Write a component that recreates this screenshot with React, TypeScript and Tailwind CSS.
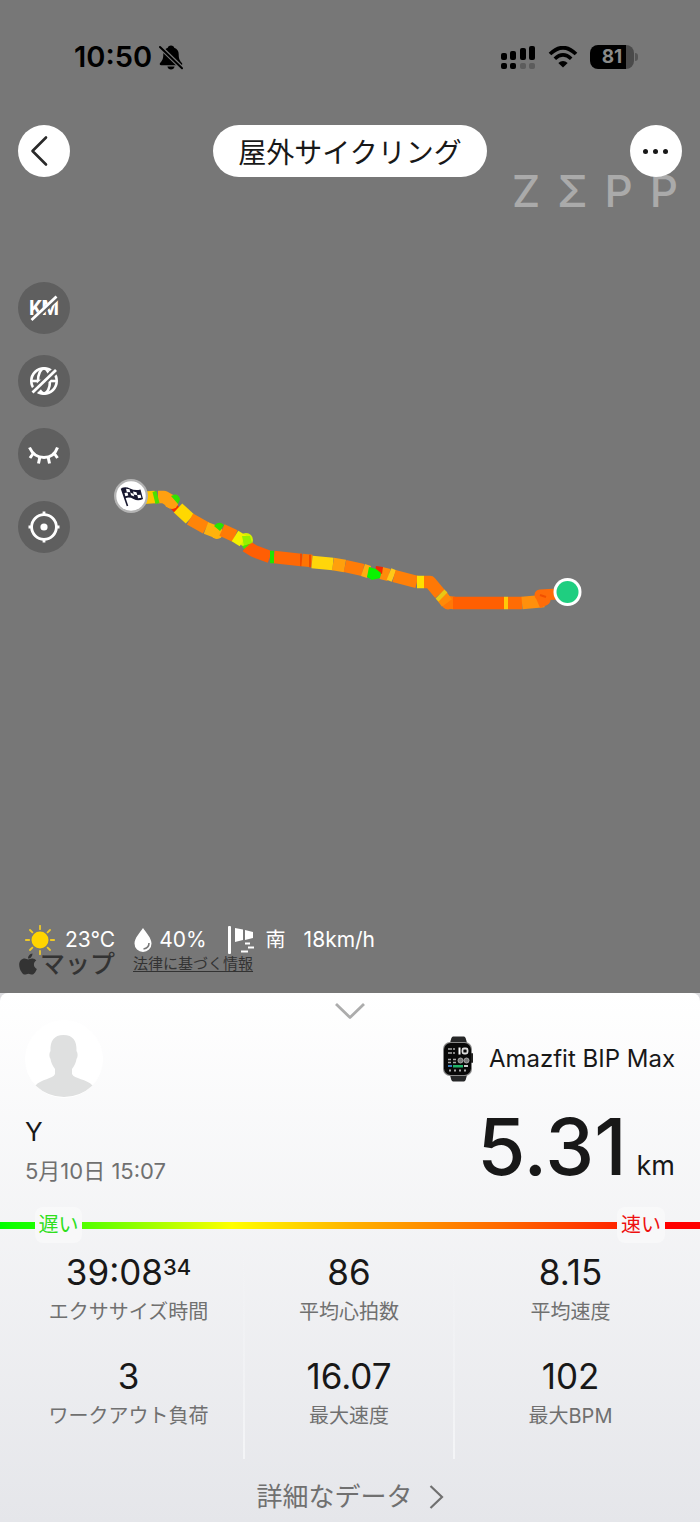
import { FaApple } from "react-icons/fa";

type Segment = { d: string; color: string };

const segments: Segment[] = [
  { d: "M140 498 L155 497", color: "#ffc400" },
  { d: "M158 497 L164 497 L171 501 L174 504", color: "#ffa010" },
  { d: "M154 498 L158 497", color: "#4be000" },
  { d: "M173 511 L178 506", color: "#f52a00" },
  { d: "M178 508 L190 519", color: "#ffd800" },
  { d: "M190 519 L206 528", color: "#ff8408" },
  { d: "M206 528 L219 533", color: "#ffb20c" },
  { d: "M222 530 L235 536", color: "#ff7a06" },
  { d: "M235 536 L243 541", color: "#f4f000" },
  { d: "M246 546 L254 551 L270 557", color: "#ff5e04" },
  { d: "M274 557 L301 560", color: "#ff6804" },
  { d: "M270 557 L274 557", color: "#1fe400" },
  { d: "M300 560 L302 560", color: "#f04a00" },
  { d: "M302 560 L312 561", color: "#ff7404" },
  { d: "M309 561 L311 561", color: "#ee4c00" },
  { d: "M312 562 L333 564", color: "#ffd60a" },
  { d: "M333 564 L345 566", color: "#ffa00c" },
  { d: "M345 566 L363 570", color: "#ff7c08" },
  { d: "M363 570 L369 572", color: "#ffae10" },
  { d: "M381 573 L389 575", color: "#ff8c0a" },
  { d: "M389 574 L394 576", color: "#ffc818" },
  { d: "M394 576 L417 582", color: "#ff8008" },
  { d: "M417 582 L424 582", color: "#ffe000" },
  { d: "M424 582 L430 582 L440 594", color: "#ff7806" },
  { d: "M447 602 L454 603", color: "#ff7806" },
  { d: "M441 595 L447 603", color: "#ff8a08" },
  { d: "M440 594 L443 597", color: "#e8c814" },
  { d: "M453 603 L504 603", color: "#ff5f02" },
  { d: "M508 603 L522 603", color: "#ff6c04" },
  { d: "M504 603 L508 603", color: "#ffc808" },
  { d: "M522 603 L544 601", color: "#ff900c" },
];

function Route() {
  return (
    <svg
      className="pointer-events-none absolute left-0 top-0 h-[700px] w-[700px]"
      viewBox="0 0 700 700"
      fill="none"
      aria-hidden="true"
    >
      <circle cx="175" cy="499" r="4.5" fill="#38e000" />
      <circle cx="170" cy="502" r="6" fill="#ffa010" />
      <circle cx="173" cy="504" r="5" fill="#ffa010" />
      <circle cx="217" cy="533" r="6" fill="#ffb20c" />
      <circle cx="246" cy="540" r="7" fill="#d4f000" />
      <circle cx="448" cy="603" r="6.5" fill="#ff7806" />
      <g strokeWidth="12.5" strokeLinejoin="round">
        {segments.map((s) => (
          <path key={s.d} d={s.d} stroke={s.color} />
        ))}
      </g>
      <circle cx="172" cy="503" r="6" fill="#ffa010" />
      <path d="M171 496 Q177 493 180 499 L178 504 Z" fill="#30e400" />
      <path d="M214 526 Q219 520 224 525 L220 531 Z" fill="#28e400" />
      <path d="M242 536 L250 536 L252 543 L244 546 Z" fill="#96f000" />
      <path d="M242 546 L250 544 L244 549 Z" fill="#40e800" />
      <path d="M376 566 L383 567 L382 574 L375 572 Z" fill="#f02800" />
      <path d="M369 567 L376 569 L381 573 L380 578 L372 580 L367 577 Z" fill="#08f400" />
      <path d="M538 603 L545 600 L540 595 L558 594" stroke="#ff6c08" strokeWidth="11" strokeLinejoin="round" />
      <path d="M540 595 L546 597" stroke="#f25000" strokeWidth="2" />
      <circle cx="131" cy="496" r="17" fill="#b4b4b4" />
      <circle cx="131" cy="496" r="14.700" fill="#fff" />
      <path d="M121.5 488.500 L127.500 506" stroke="#17172e" strokeWidth="1.600" />
      <path d="M121.500 488 Q126 486.500 130 488.500 Q135 491 140.500 489.500 L143 499 Q138 501.500 133.500 499 Q129 496.500 125 498.500 Z" fill="#17172e" />
      <path d="M126 488.800 l3.500 .5 .8 3 -3.500 -.4z M133 491.500 l3.500 .7 .8 3 -3.500 -.7z M130.300 492.500 l3.200 1.500 .8 2.500 -3.200 -1.200z M124.500 493 l3 -.5 .8 3 -3 .8z M137.300 495 l3.300 -.2 .8 3 -3.300 .5z" fill="#fff" />
      <circle cx="567.500" cy="592" r="14" fill="#fff" />
      <circle cx="567.500" cy="592" r="11" fill="#1fce80" />
    </svg>
  );
}

function StatusBar() {
  return (
    <div className="flex h-[34px] items-center justify-between pl-[74px] pr-[62px] text-black">
      <div className="flex items-center gap-[7px]">
        <time className="text-[29px] font-semibold leading-[34px]">10:50</time>
        <svg className="h-[25px] w-6" viewBox="0 0 24 25" aria-label="消音">
          <path d="M12 0.500c1.900 0 2.900 1 3.200 2.200 3 1 4.500 3.400 4.500 6.600 0 5.200 1.300 6.500 3.200 8.700.8 1 .3 2.200-1 2.200H2.100c-1.300 0-1.800-1.200-1-2.200 1.900-2.200 3.200-3.500 3.200-8.700 0-3.200 1.500-5.600 4.500-6.600C9.100 1.500 10.100.5 12 .5zM8.400 21.600h7.200c-.4 1.800-1.700 2.900-3.600 2.900s-3.200-1.100-3.600-2.900z" />
          <path d="M0 1 L24 24" stroke="#777" strokeWidth="4.500" />
          <path d="M1 2 L23 23.200" stroke="#000" strokeWidth="2" strokeLinecap="round" />
        </svg>
      </div>
      <div className="flex items-center gap-3">
        <svg className="h-[25px] w-9" viewBox="0 0 36 25" aria-label="電波">
          <rect x="1" y="8" width="6" height="7" rx="2" />
          <rect x="10" y="6" width="6" height="9" rx="2" />
          <rect x="20" y="3" width="6" height="12" rx="2" />
          <rect x="29" y="1" width="6" height="14" rx="2" />
          <rect x="1" y="18" width="6" height="6" rx="2" />
          <rect x="10" y="18" width="6" height="6" rx="2" />
          <rect x="20" y="18" width="6" height="6" rx="2" fill="#5c5c5c" />
          <rect x="29" y="18" width="6" height="6" rx="2" fill="#5c5c5c" />
        </svg>
        <svg className="h-[22px] w-[30px]" viewBox="0 0 30 22" fill="none" aria-label="Wi-Fi">
          <path d="M2 8 Q15 -4.500 28 8" stroke="#000" strokeWidth="3.800" />
          <path d="M6.800 12.800 Q15 5 23.200 12.800" stroke="#000" strokeWidth="3.600" />
          <path d="M10.300 17 Q15 13 19.700 17 L15 21.500 Z" fill="#000" />
        </svg>
        <div className="flex items-center gap-px">
          <div className="flex h-6 w-11 items-center justify-center rounded-lg bg-[linear-gradient(90deg,#000_81%,#4a4a4a_81%)] text-[19px] font-bold leading-6 text-[#8a8a8a]">
            81
          </div>
          <span className="h-2 w-[3px] rounded-r-full bg-[#555]" />
        </div>
      </div>
    </div>
  );
}

function KmOff() {
  return (
    <svg className="size-8" viewBox="0 0 32 32" aria-hidden="true">
      <text
        x="16"
        y="23"
        textAnchor="middle"
        className="fill-white font-['Roboto',sans-serif] text-[20px] font-bold leading-5"
      >
        KM
      </text>
      <path d="M4 29 L29 6" stroke="#5f5f5f" strokeWidth="5" />
      <path d="M3.500 28 L28.500 4.500" stroke="#fff" strokeWidth="2.800" />
    </svg>
  );
}

function GlobeOff() {
  return (
    <svg className="size-8" viewBox="0 0 32 32" fill="none" stroke="#fff" strokeWidth="2.600" aria-hidden="true">
      <circle cx="16" cy="16" r="12.700" />
      <ellipse cx="16" cy="16" rx="6" ry="12.500" />
      <path d="M4 16 H28" />
      <path d="M4 28 L28 5" stroke="#5f5f5f" strokeWidth="7" />
      <path d="M4.500 27.500 L28 5" strokeWidth="2.800" />
    </svg>
  );
}

function EyeClosed() {
  return (
    <svg className="size-8" viewBox="0 0 32 32" fill="none" stroke="#fff" strokeWidth="3" aria-hidden="true">
      <path d="M1.500 9.500 Q6 19.500 16 19.500 Q26 19.500 29.500 9.500" />
      <path d="M5.500 15 L2 20 M12 18.500 L10.500 25.500 M20 18.500 L21.500 25.500 M26 15 L29.500 20" />
    </svg>
  );
}

function Target() {
  return (
    <svg className="size-8" viewBox="0 0 32 32" fill="none" stroke="#fff" strokeWidth="2.800" aria-hidden="true">
      <circle cx="16" cy="16" r="12.400" />
      <path d="M16 .5 V4 M16 28 V31.500 M.5 16 H4 M28 16 H31.500" />
      <circle cx="16" cy="16" r="3.600" fill="#fff" stroke="none" />
    </svg>
  );
}

const tools = [
  { label: "距離表示", icon: <KmOff /> },
  { label: "地図表示", icon: <GlobeOff /> },
  { label: "軌跡を隠す", icon: <EyeClosed /> },
  { label: "現在位置", icon: <Target /> },
];

function Weather() {
  return (
    <div className="flex h-7 items-center pl-[25px] text-[21px] leading-7 text-white">
      <svg className="size-[30px]" viewBox="0 0 30 30" aria-hidden="true">
        <circle cx="15" cy="15" r="8.500" fill="#ffd400" />
        <path
          d="M15 .8v3.400M15 25.800v3.400M.8 15h3.400M25.800 15h3.400M5 5l2.400 2.400M22.600 22.600L25 25M5 25l2.400-2.400M22.600 7.400L25 5"
          stroke="#efc928"
          strokeWidth="1.800"
          strokeLinecap="round"
        />
      </svg>
      <span className="ml-[10px]">23°C</span>
      <svg className="ml-[19px] h-[26px] w-[18px]" viewBox="0 0 18 26" aria-hidden="true">
        <path d="M9 1 C12 5.500 17.500 11 17.500 16.500 A8.500 8.500 0 0 1 .5 16.500 C.5 11 6 5.500 9 1Z" fill="#fff" />
        <path d="M15 16 Q15 21 9.500 22" stroke="#777" strokeWidth="1.600" fill="none" />
      </svg>
      <span className="ml-[7px]">40%</span>
      <svg className="ml-[21px] h-7 w-[27px]" viewBox="0 0 27 28" fill="#fff" aria-hidden="true">
        <rect x="0" y="0" width="3" height="28" rx="1" />
        <path d="M7 2 L15 3.500 V14 L7 16 Z M17 4 L25 6 V12 L17 14 Z" />
        <path d="M17 17.500h5M20 21.500h6M13 25.500h7" stroke="#fff" strokeWidth="1.800" />
      </svg>
      <span className="ml-[11px] text-xl">南</span>
      <span className="ml-[18px]">18km/h</span>
    </div>
  );
}

function Watch() {
  return (
    <svg className="h-[46px] w-[30px]" viewBox="0 0 30 46" aria-hidden="true">
      <path d="M7 8 Q8 .5 10 .5 H21 Q23 .5 24 8 V38 Q23 45.500 21 45.500 H10 Q8 45.500 7 38 Z" fill="#262728" />
      <rect x="0" y="6" width="29" height="34" rx="7" fill="#898989" />
      <rect x="28" y="17" width="2" height="10" rx="1" fill="#222" />
      <rect x="1" y="7" width="27" height="32" rx="6.500" fill="#090909" />
      <path d="M5 13h4M10 13h2M5 17h4M10 17h2M5 23.500h3M10 23.500h3M5 26.500h3M10 26.500h3" stroke="#aaa" strokeWidth="1.500" />
      <path d="M16.500 11.500v7" stroke="#fff" strokeWidth="2" />
      <rect x="19.500" y="12.500" width="5" height="5" rx="1.500" fill="none" stroke="#ddd" strokeWidth="1.800" />
      <circle cx="17.500" cy="24.500" r="2.500" fill="#777" stroke="#aaa" />
      <circle cx="23.500" cy="24.500" r="2.500" fill="#777" stroke="#aaa" />
      <rect x="10" y="29" width="10" height="2.500" fill="#20b66a" />
      <path d="M5 30h4" stroke="#377ec0" strokeWidth="2" />
      <path d="M21 30h4" stroke="#ccc" strokeWidth="2" />
      <path d="M6 34.500h2M11 34.500h2M16 34.500h2M21 34.500h2" stroke="#aaa" strokeWidth="2" />
    </svg>
  );
}

type StatProps = { value: string; sup?: string; label: string };

function Stat({ value, sup, label }: StatProps) {
  return (
    <div className="flex h-[104px] flex-col items-center">
      <dd className="order-1 flex text-[35px] leading-[42px] text-[#181818]">
        {value}
        {sup && <sup className="top-0 pt-1 text-[22px] font-medium leading-6">{sup}</sup>}
      </dd>
      <dt className="order-2 mt-[5px] text-xl leading-7 text-[#707070]">{label}</dt>
    </div>
  );
}

const columns: StatProps[][] = [
  [
    { value: "39:08", sup: "34", label: "エクササイズ時間" },
    { value: "3", label: "ワークアウト負荷" },
  ],
  [
    { value: "86", label: "平均心拍数" },
    { value: "16.07", label: "最大速度" },
  ],
  [
    { value: "8.15", label: "平均速度" },
    { value: "102", label: "最大BPM" },
  ],
];

export default function App() {
  return (
    <main className="flex min-h-screen flex-col bg-[#dcdcdf] font-['Inter','Noto_Sans_CJK_JP',sans-serif]">
      <section className="relative bg-[#777777] pb-[15px] pt-10">
        <Route />
        <StatusBar />
        <div className="absolute right-[22px] top-[166px] flex gap-[17px] text-[44px] font-medium leading-[50px] text-[#aaaaaa]">
          <span>Z</span>
          <span>Σ</span>
          <span>P</span>
          <span>P</span>
        </div>
        <header className="relative mt-[51px] flex items-center justify-between px-[18px]">
          <button type="button" aria-label="戻る" className="flex size-[52px] items-center justify-center rounded-full bg-white pr-2">
            <svg className="h-8 w-5" viewBox="0 0 20 32" fill="none" aria-hidden="true">
              <path d="M16 2.500 L2.500 16 L16 29.500" stroke="#2a2a2a" strokeWidth="2.600" strokeLinecap="round" strokeLinejoin="round" />
            </svg>
          </button>
          <h1 className="flex h-[52px] items-center rounded-full bg-white px-[25px] pt-1 text-[28px] leading-[48px] text-[#181818]">
            屋外サイクリング
          </h1>
          <button type="button" aria-label="メニュー" className="flex size-[52px] items-center justify-center gap-[5px] rounded-full bg-white">
            <span className="size-[5px] rounded-full bg-[#181818]" />
            <span className="size-[5px] rounded-full bg-[#181818]" />
            <span className="size-[5px] rounded-full bg-[#181818]" />
          </button>
        </header>
        <nav className="relative mt-[105px] flex flex-col items-start gap-[21px] pl-[18px]">
          {tools.map((t) => (
            <button key={t.label} type="button" aria-label={t.label} className="flex size-[52px] items-center justify-center rounded-full bg-[#5f5f5f]">
              {t.icon}
            </button>
          ))}
        </nav>
        <div className="relative mt-[373px]">
          <Weather />
          <div className="-mt-1 flex h-7 items-center pl-4 text-[#333333]">
            <FaApple className="size-6" aria-hidden="true" />
            <span className="text-[25px] font-medium leading-7">マップ</span>
            <a href="#legal" className="ml-[18px] text-[15px] leading-7 underline underline-offset-2">
              法律に基づく情報
            </a>
          </div>
        </div>
      </section>

      <section className="flex-1 rounded-t-lg bg-linear-to-b from-white to-[#e5e6ea] pb-2">
        <button type="button" aria-label="閉じる" className="mx-auto block pt-[9px]">
          <svg className="h-[18px] w-8" viewBox="0 0 32 18" fill="none" aria-hidden="true">
            <path d="M2 2 L16 15.500 L30 2" stroke="#acacac" strokeWidth="2.800" strokeLinejoin="round" />
          </svg>
        </button>

        <div className="flex items-center justify-between px-[25px]">
          <svg className="size-[78px]" viewBox="0 0 78 78" aria-label="プロフィール">
            <circle cx="39" cy="39" r="39" fill="#fff" />
            <path
              d="M10.500 65.500 C16 59 28 59 30 54 V49 C27.500 46 26 42 25.500 39 C24 37 24 33 25.500 31 C25 21 29 15 38.500 15 C48 15 52 21 51.500 31 C53 33 53 37 51.500 39 C51 42 49.500 46 47 49 V54 C49 59 62 59 67.500 65.500 Q55 77 39 77 Q23 77 10.500 65.500Z"
              fill="#dfe0e0"
            />
          </svg>
          <div className="flex items-center gap-4 text-2xl leading-8 text-[#181818]">
            <Watch />
            <span>Amazfit BIP Max</span>
          </div>
        </div>

        <div className="flex items-end justify-between px-[25px]">
          <div className="pb-[6px]">
            <p className="text-[26px] leading-9 text-[#181818]">Y</p>
            <p className="mt-[5px] text-[22px] leading-8 text-[#707070]">
              <time>5月10日 15:07</time>
            </p>
          </div>
          <p className="flex items-baseline gap-[10px] pt-[3px] text-[#181818]">
            <span className="text-[78px] font-medium leading-[92px]">5.31</span>
            <span className="text-[27px] leading-8">km</span>
          </p>
        </div>

        <div className="mt-[14px] flex items-center text-xl leading-9">
          <span className="h-[7px] w-[35px] bg-linear-to-r from-[#00ff00] to-[#1cff00]" />
          <span className="w-[47px] rounded-lg bg-white/40 text-center text-[#2fdf1c]">遅い</span>
          <span className="h-[7px] flex-1 bg-[linear-gradient(90deg,#50ff00_0%,#ffff00_28%,#ffb000_51%,#ff6a00_78%,#ff2600_100%)]" />
          <span className="w-12 rounded-lg bg-white/40 text-center text-[#ee1010]">速い</span>
          <span className="h-[7px] w-[35px] bg-[#ff0000]" />
        </div>

        <dl className="mt-1 grid grid-cols-[11fr_10fr_11fr] px-[14px]">
          {columns.map((column) => (
            <div
              key={column[0].label}
              className="border-r-2 pt-1 [border-image:linear-gradient(to_bottom,transparent,#f4f5f7)_1] last:border-r-0"
            >
              {column.map((stat) => (
                <Stat key={stat.label} {...stat} />
              ))}
            </div>
          ))}
        </dl>

        <a href="#details" className="mt-5 flex items-center justify-center gap-4 text-[26px] leading-9 text-[#707070]">
          詳細なデータ
          <svg className="h-6 w-[15px]" viewBox="0 0 15 24" fill="none" aria-hidden="true">
            <path d="M1.500 1 L13 12 L1.500 23" stroke="#707070" strokeWidth="2.200" />
          </svg>
        </a>
      </section>
    </main>
  );
}
